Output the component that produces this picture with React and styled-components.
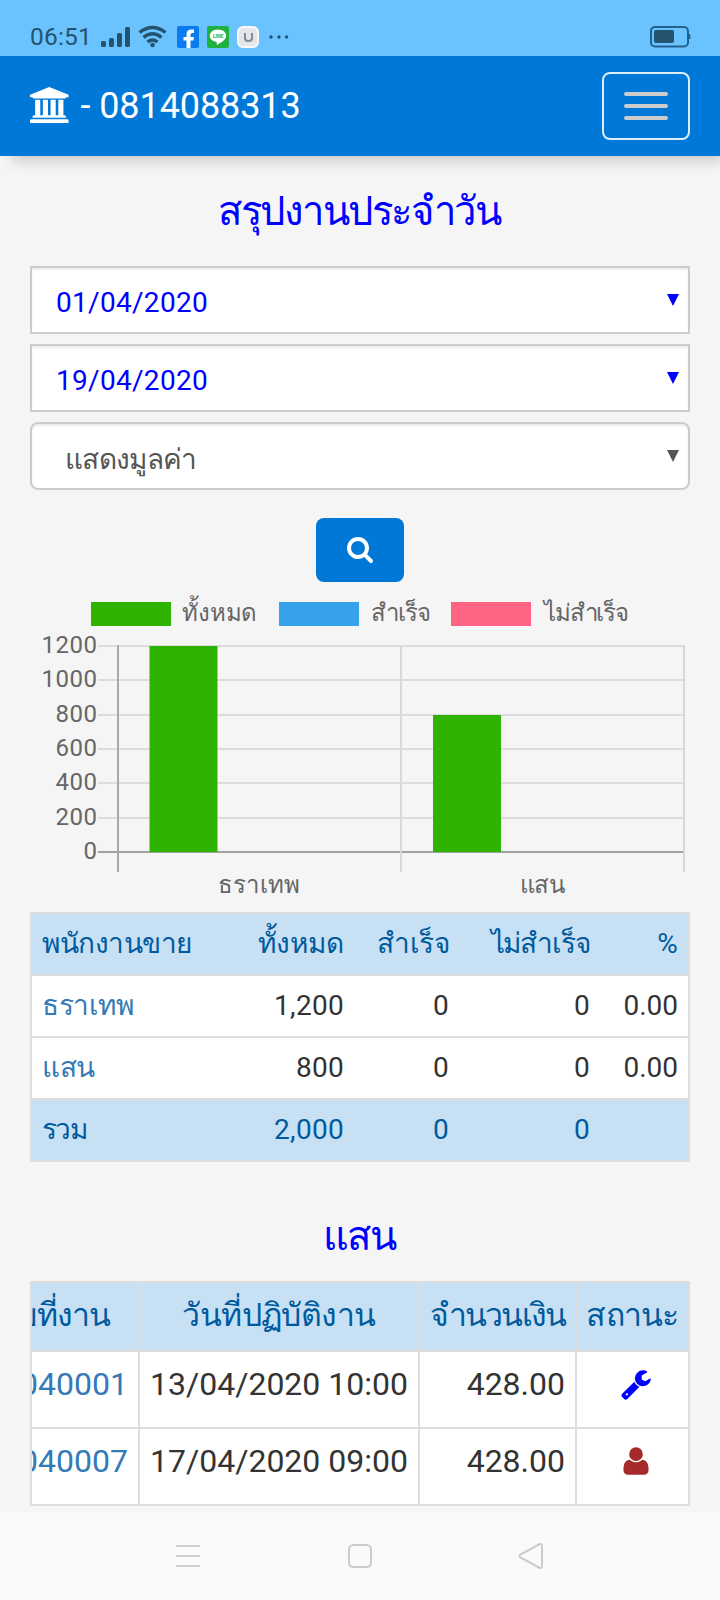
import styled, { createGlobalStyle } from 'styled-components';

const GlobalStyle = createGlobalStyle`
  * {
    box-sizing: border-box;
  }
  body {
    margin: 0;
    background: #f5f5f5;
    color: #333;
    font-family: Roboto, 'Noto Sans', sans-serif;
    font-size: 28px;
  }
`;

const Screen = styled.div`
  width: 720px;
  height: 1600px;
  display: flex;
  flex-direction: column;
  overflow: hidden;
`;

const StatusBar = styled.div`
  height: 56px;
  flex: none;
  padding: 17px 29px 0 30px;
  display: flex;
  align-items: center;
  background: #6ac2ff;
  color: #24536f;
`;

const Clock = styled.span`
  width: 71px;
  font-size: 24.5px;
  letter-spacing: 0.2px;
  line-height: 40px;
`;

const StatusIcons = styled.div`
  display: flex;
  align-items: center;
  flex: 1;

  svg {
    display: block;
  }
`;

const Navbar = styled.header`
  height: 100px;
  flex: none;
  padding: 0 30px;
  display: flex;
  align-items: center;
  justify-content: space-between;
  background: #0078d7;
  color: #fff;
  box-shadow: 8px 10px 12px -4px rgba(0, 0, 0, 0.16);
`;

const Brand = styled.div`
  display: flex;
  align-items: center;
  gap: 12px;
  font-size: 36px;
  letter-spacing: -0.1px;
  line-height: 40px;

  svg {
    display: block;
    margin-bottom: 2px;
  }
`;

const Toggle = styled.button`
  width: 88px;
  height: 68px;
  padding: 0;
  display: flex;
  flex-direction: column;
  align-items: center;
  justify-content: center;
  gap: 8px;
  background: transparent;
  border: 2px solid #ddeefa;
  border-radius: 8px;
`;

const ToggleBar = styled.span`
  width: 44px;
  height: 4px;
  border-radius: 2px;
  background: #ccc;
`;

const Main = styled.main`
  flex: 1;
  padding: 0 30px;
  display: flex;
  flex-direction: column;
`;

const Title = styled.h3`
  margin: 0;
  height: ${(p) => p.$height}px;
  padding: ${(p) => p.$top}px 2px 0 0;
  font-size: 40px;
  font-weight: 400;
  letter-spacing: -1.5px;
  line-height: 44px;
  text-align: center;
  color: #00f;
`;

const Fields = styled.div`
  display: flex;
  flex-direction: column;
  gap: 10px;
`;

const Field = styled.div`
  height: 68px;
  padding: ${(p) => (p.$select ? '5px 9px 0 33px' : '4px 9px 0 24px')};
  display: flex;
  align-items: center;
  justify-content: space-between;
  background: #fff;
  border: 2px solid #ccc;
  border-radius: ${(p) => (p.$select ? 8 : 0)}px;
  box-shadow: inset 0 2px 2px rgba(0, 0, 0, 0.075);
  color: ${(p) => (p.$select ? '#555' : '#00f')};
  font-size: 28px;
  letter-spacing: ${(p) => (p.$select ? -0.65 : 0.3)}px;
`;

const Caret = styled.span`
  width: 0;
  margin-bottom: ${(p) => (p.$raised ? 6 : 4)}px;
  border: 6px solid transparent;
  border-top: 12px solid currentColor;
  border-bottom: 0;
`;

const SearchButton = styled.button`
  width: 88px;
  height: 64px;
  margin: 28px auto 8px;
  padding: 0 0 3px;
  display: flex;
  align-items: center;
  justify-content: center;
  background: #0078d7;
  color: #fff;
  border: 0;
  border-radius: 8px;
`;

const ChartSvg = styled.svg`
  display: block;
  flex: none;
  width: 660px;
  height: 322px;
  font-size: 24px;
  fill: #666;
`;

const SummaryTable = styled.table`
  width: 660px;
  table-layout: fixed;
  border: 2px solid #ddd;
  border-spacing: 0;
  background: #fff;
`;

const SummaryRow = styled.tr`
  height: ${(p) => (p.$last ? 60 : 62)}px;
  background: ${(p) => (p.$tinted ? '#c7e0f4' : '#fff')};
  color: ${(p) => (p.$tinted ? '#005a9e' : '#333')};

  td {
    border-bottom: ${(p) => (p.$last ? 0 : 2)}px solid #ddd;
  }
`;

const SummaryCell = styled.td`
  padding: 0 10px;
  line-height: 40px;
  font-size: 28px;
  letter-spacing: ${(p) => p.$tracking ?? 0.3}px;
  text-align: ${(p) => (p.$left ? 'left' : 'right')};
  color: ${(p) => (p.$link ? '#337ab7' : 'inherit')};
  white-space: nowrap;
`;

// scrolled to the far right, so the first column is cut off
const Scroller = styled.div`
  width: 660px;
  height: 225px;
  display: flex;
  justify-content: flex-end;
  overflow: hidden;
  border: 2px solid #ddd;
  background: #fff;
`;

const JobTable = styled.table`
  width: 716px;
  flex: none;
  table-layout: fixed;
  border-spacing: 0;
  font-size: 32px;
`;

const JobHead = styled.th`
  height: 69px;
  padding: 0 0 4px;
  background: #c7e0f4;
  color: #005a9e;
  font-weight: 400;
  letter-spacing: ${(p) => p.$tracking}px;
  border-right: 2px solid #ddd;
  border-bottom: 2px solid #ddd;
  white-space: nowrap;

  &:first-child {
    padding-right: 13px;
  }

  &:last-child {
    border-right: 0;
  }
`;

const JobCell = styled.td`
  height: 77px;
  padding: 0 10px 11px;
  line-height: 44px;
  text-align: ${(p) => p.$align || 'right'};
  color: ${(p) => p.$color || '#333'};
  border-right: 2px solid #ddd;
  border-bottom: 2px solid #ddd;
  white-space: nowrap;

  &:last-child {
    padding-left: 16px;
    border-right: 0;
  }

  svg {
    display: block;
    margin: 0 auto;
  }
`;

const SystemNav = styled.nav`
  height: 88px;
  flex: none;
  padding: 0 176px;
  display: flex;
  align-items: center;
  justify-content: space-between;
  background: #fafafa;

  svg:nth-child(2) {
    margin-left: 2px;
  }
`;

// FontAwesome 4 glyphs, drawn on a 1792 unit em
const glyphs = {
  bank: {
    width: 1920,
    d: 'M960 0l960 384v128h-128q0 26-20.5 45t-48.5 19h-1526q-28 0-48.5-19t-20.5-45h-128v-128zM256 640h256v768h128v-768h256v768h128v-768h256v768h128v-768h256v768h59q28 0 48.5 19t20.5 45v64h-1664v-64q0-26 20.5-45t48.5-19h59v-768zM1851 1600q28 0 48.5 19t20.5 45v128h-1920v-128q0-26 20.5-45t48.5-19h1782z',
  },
  search: {
    width: 1792,
    d: 'M1216 832q0-185-131.5-316.5t-316.5-131.5-316.5 131.5-131.5 316.5 131.5 316.5 316.5 131.5 316.5-131.5 131.5-316.5zm512 832q0 52-38 90t-90 38q-54 0-90-38l-343-342q-179 124-399 124-143 0-273.5-55.5t-225-150-150-225-55.5-273.5 55.5-273.5 150-225 225-150 273.5-55.5 273.5 55.5 225 150 150 225 55.5 273.5q0 220-124 399l343 343q37 37 37 90z',
  },
  wrench: {
    width: 1792,
    d: 'M448 1472q0-26-19-45t-45-19-45 19-19 45 19 45 45 19 45-19 19-45zm644-420l-682 682q-37 37-90 37-52 0-91-37l-106-108q-38-36-38-90 0-53 38-91l681-681q39 98 114.5 173.5t173.5 114.5zm634-435q0 39-23 106-47 134-164.5 217.5t-258.5 83.5q-185 0-316.5-131.5t-131.5-316.5 131.5-316.5 316.5-131.5q58 0 121.5 16.5t107.5 46.5q16 11 16 28t-16 28l-293 169v224l193 107q5-3 79-48.5t135.5-81 70.5-35.5q15 0 23.5 10t8.5 25z',
  },
  user: {
    width: 1792,
    d: 'M1600 1405q0 120-73 189.5t-194 69.5h-874q-121 0-194-69.5t-73-189.5q0-53 3.5-103.5t14-109 26.5-108.5 43-97.5 62-81 85.5-53.5 111.5-20q9 0 42 21.5t74.5 48 108 48 133.5 21.5 133.5-21.5 108-48 74.5-48 42-21.5q61 0 111.5 20t85.5 53.5 62 81 43 97.5 26.5 108.5 14 109 3.5 103.5zm-320-893q0 159-112.5 271.5t-271.5 112.5-271.5-112.5-112.5-271.5 112.5-271.5 271.5-112.5 271.5 112.5 112.5 271.5z',
  },
};

const Glyph = ({ name, size }) => {
  const { width, d } = glyphs[name];
  return (
    <svg width={(size * width) / 1792} height={size} viewBox={`0 0 ${width} 1792`} fill="currentColor">
      <path d={d} />
    </svg>
  );
};

const series = [
  { label: 'ทั้งหมด', color: '#2eb400', x: 61, textX: 152, textWidth: 75 },
  { label: 'สำเร็จ', color: '#36a2eb', x: 249, textX: 340, textWidth: 60 },
  { label: 'ไม่สำเร็จ', color: '#ff6384', x: 421, textX: 514, textWidth: 85 },
];

const ticks = [1200, 1000, 800, 600, 400, 200, 0];

const staff = [
  { name: 'ธราเทพ', labelWidth: 82, total: 1200, done: 0, failed: 0, percent: '0.00' },
  { name: 'แสน', labelWidth: 45, total: 800, done: 0, failed: 0, percent: '0.00' },
];

const jobs = [
  { id: '63040001', date: '13/04/2020 10:00', amount: '428.00', icon: 'wrench', color: '#00f' },
  { id: '63040007', date: '17/04/2020 09:00', amount: '428.00', icon: 'user', color: '#a52a2a' },
];

const Chart = () => {
  const top = 56;
  const bottom = 262;
  const y = (value) => Math.round(bottom - ((bottom - top) * value) / 1200);

  return (
    <ChartSvg viewBox="0 0 660 322">
      {series.map((item) => (
        <g key={item.label}>
          <rect x={item.x} y="12" width="80" height="24" fill={item.color} />
          <text x={item.textX} y="31" textLength={item.textWidth}>{item.label}</text>
        </g>
      ))}
      {ticks.map((tick) => (
        <g key={tick}>
          <rect x="68" y={y(tick) - 1} width="586" height="2" fill={tick === 0 ? '#a1a1a1' : '#dcdcdc'} />
          <text x="67.5" y={y(tick) + 7} textAnchor="end" letterSpacing="0.5">{tick}</text>
        </g>
      ))}
      {[88, 371, 654].map((x, i) => (
        <rect key={x} x={x - 1} y={top - 1} width="2" height="227" fill={i === 0 ? '#a8a8a8' : '#d8d8d8'} />
      ))}
      {staff.map((person, i) => (
        <g key={person.name}>
          <rect x={119.5 + i * 283.5} y={y(person.total)} width="68" height={bottom - y(person.total)} fill="#2eb400" />
          <text x={229 + i * 283} y="303" textAnchor="middle" textLength={person.labelWidth}>{person.name}</text>
        </g>
      ))}
    </ChartSvg>
  );
};

const StatusLeft = () => (
  <svg width="190" height="24" viewBox="0 0 190 24" fill="#24536f">
    <rect x="0" y="16" width="5" height="6" rx="1.5" />
    <rect x="8" y="13" width="5" height="9" rx="1.5" />
    <rect x="16" y="8" width="5" height="14" rx="1.5" />
    <rect x="24" y="2" width="5" height="20" rx="1.5" />
    <g fill="none" stroke="#24536f" strokeWidth="3.4">
      <path d="M38.500 7.500Q51.500 -2.500 64.500 7.500" />
      <path d="M42.500 12.500Q51.500 5 60.500 12.500" />
      <path d="M46.500 17Q51.500 13 56.500 17" />
    </g>
    <circle cx="51.5" cy="20" r="2.3" />
    <rect x="76" y="1" width="22" height="22" rx="2" fill="#0b7cf0" />
    <path d="M85.5 23v-7.5h-3V12h3V9.5q0-5 5-5H93V8h-1.500q-2 0-2 2v2H93l-.6 3.5h-2.900V23z" fill="#fff" />
    <rect x="106" y="1" width="22" height="22" rx="2" fill="#1fb141" />
    <path d="M117 4.500c-4.800 0-8.200 2.800-8.200 6.300 0 3.300 2.800 5.600 6.700 6.100l.4 3c2.500-1.300 9.300-4.800 9.300-9.100 0-3.500-3.400-6.300-8.200-6.300z" fill="#fff" />
    <text x="117" y="13" textAnchor="middle" fontSize="5" fontWeight="700" fill="#1fb141">LINE</text>
    <rect x="136" y="1" width="22" height="22" rx="6" fill="#f6f8fa" />
    <rect x="138" y="3" width="18" height="18" rx="4" fill="#e4e6ea" />
    <path d="M144 8v5q0 3 3 3h1q3 0 3-3V8" fill="none" stroke="#858a98" strokeWidth="2" />
    <circle cx="170" cy="12" r="1.7" />
    <circle cx="178" cy="12" r="1.7" />
    <circle cx="185.5" cy="12" r="1.7" />
  </svg>
);

const Battery = () => (
  <svg width="41" height="22" viewBox="0 0 41 22">
    <rect x="1" y="1" width="37" height="19.5" rx="4" fill="none" stroke="#23618c" strokeWidth="2" />
    <rect x="4" y="4" width="20" height="13" rx="2" fill="#24536f" />
    <rect x="38.5" y="8" width="2" height="5" rx="1" fill="#23618c" />
  </svg>
);

const App = () => {
  const total = staff.reduce((sum, person) => sum + person.total, 0);

  return (
    <Screen>
      <GlobalStyle />
      <StatusBar>
        <Clock>06:51</Clock>
        <StatusIcons><StatusLeft /></StatusIcons>
        <Battery />
      </StatusBar>

      <Navbar>
        <Brand>
          <Glyph name="bank" size={36} />
          <span>- 0814088313</span>
        </Brand>
        <Toggle>
          <ToggleBar />
          <ToggleBar />
          <ToggleBar />
        </Toggle>
      </Navbar>

      <Main>
        <Title $height={110} $top={34}>สรุปงานประจำวัน</Title>
        <Fields>
          <Field>01/04/2020<Caret /></Field>
          <Field>19/04/2020<Caret /></Field>
          <Field $select>แสดงมูลค่า<Caret $raised /></Field>
        </Fields>
        <SearchButton><Glyph name="search" size={28} /></SearchButton>

        <Chart />

        <SummaryTable>
          <colgroup>
            <col style={{ width: 190 }} />
            <col style={{ width: 132 }} />
            <col style={{ width: 105 }} />
            <col style={{ width: 141 }} />
            <col />
          </colgroup>
          <tbody>
            <SummaryRow $tinted>
              <SummaryCell $left $tracking={-0.5}>พนักงานขาย</SummaryCell>
              <SummaryCell $tracking={0.1}>ทั้งหมด</SummaryCell>
              <SummaryCell $tracking={-0.6}>สำเร็จ</SummaryCell>
              <SummaryCell $tracking={-1.1}>ไม่สำเร็จ</SummaryCell>
              <SummaryCell>%</SummaryCell>
            </SummaryRow>
            {staff.map((person) => (
              <SummaryRow key={person.name}>
                <SummaryCell $left $link $tracking={-0.5}>{person.name}</SummaryCell>
                <SummaryCell>{person.total.toLocaleString('en-US')}</SummaryCell>
                <SummaryCell>{person.done}</SummaryCell>
                <SummaryCell>{person.failed}</SummaryCell>
                <SummaryCell $tracking={0}>{person.percent}</SummaryCell>
              </SummaryRow>
            ))}
            <SummaryRow $tinted $last>
              <SummaryCell $left $tracking={-1.6}>รวม</SummaryCell>
              <SummaryCell>{total.toLocaleString('en-US')}</SummaryCell>
              <SummaryCell>0</SummaryCell>
              <SummaryCell>0</SummaryCell>
              <SummaryCell />
            </SummaryRow>
          </tbody>
        </SummaryTable>

        <Title $height={119} $top={53}>แสน</Title>

        <Scroller>
          <JobTable>
            <colgroup>
              <col />
              <col style={{ width: 280 }} />
              <col style={{ width: 157 }} />
              <col style={{ width: 111 }} />
            </colgroup>
            <thead>
              <tr>
                <JobHead $tracking={-1.1}>เลขที่งาน</JobHead>
                <JobHead $tracking={-0.6}>วันที่ปฏิบัติงาน</JobHead>
                <JobHead $tracking={-1.8}>จำนวนเงิน</JobHead>
                <JobHead $tracking={-0.8}>สถานะ</JobHead>
              </tr>
            </thead>
            <tbody>
              {jobs.map((job) => (
                <tr key={job.id}>
                  <JobCell $color="#337ab7">{job.id}</JobCell>
                  <JobCell $align="center">{job.date}</JobCell>
                  <JobCell>{job.amount}</JobCell>
                  <JobCell $color={job.color}><Glyph name={job.icon} size={32} /></JobCell>
                </tr>
              ))}
            </tbody>
          </JobTable>
        </Scroller>
      </Main>

      <SystemNav>
        <svg width="24" height="24" viewBox="0 0 24 24" stroke="#d0d0d0" strokeWidth="2">
          <path d="M0 2h24M0 12h24M0 22h24" />
        </svg>
        <svg width="24" height="24" viewBox="0 0 24 24" fill="none" stroke="#ccc" strokeWidth="2">
          <rect x="1" y="1" width="22" height="22" rx="4.5" />
        </svg>
        <svg width="26" height="28" viewBox="0 0 26 28" fill="none" stroke="#ccc" strokeWidth="2" strokeLinejoin="round">
          <path d="M22 2L2.5 12.5Q.5 14 2.5 15.5L22 26Q24 26.5 24 24.5V3.5Q24 1.5 22 2z" />
        </svg>
      </SystemNav>
    </Screen>
  );
};

export default App;
